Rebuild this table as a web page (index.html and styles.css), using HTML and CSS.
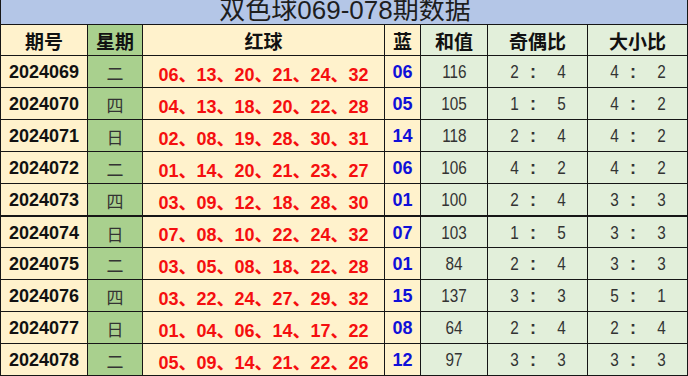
FILE: index.html
```html
<!DOCTYPE html>
<html lang="zh-CN">
<head>
<meta charset="utf-8">
<title>双色球069-078期数据</title>
<link rel="stylesheet" href="styles.css">
</head>
<body>
<div class="sheet">
  <div class="title"><span>双色球069-078期数据</span></div>
  <div class="row head">
    <div class="c y">期号</div><div class="c g">星期</div><div class="c y">红球</div><div class="c y">蓝</div><div class="c lg">和值</div><div class="c lg">奇偶比</div><div class="c lg">大小比</div>
  </div>
  <div class="row">
    <div class="c y id">2024069</div><div class="c g wk">二</div><div class="c y red">06、13、20、21、24、32</div><div class="c y blue">06</div><div class="c lg"><span class="n">116</span></div><div class="c lg ratio"><span class="d">2</span><span class="k">:</span><span class="d e">4</span></div><div class="c lg ratio"><span class="d">4</span><span class="k">:</span><span class="d e">2</span></div>
  </div>
  <div class="row">
    <div class="c y id">2024070</div><div class="c g wk">四</div><div class="c y red">04、13、18、20、22、28</div><div class="c y blue">05</div><div class="c lg"><span class="n">105</span></div><div class="c lg ratio"><span class="d">1</span><span class="k">:</span><span class="d e">5</span></div><div class="c lg ratio"><span class="d">4</span><span class="k">:</span><span class="d e">2</span></div>
  </div>
  <div class="row">
    <div class="c y id">2024071</div><div class="c g wk">日</div><div class="c y red">02、08、19、28、30、31</div><div class="c y blue">14</div><div class="c lg"><span class="n">118</span></div><div class="c lg ratio"><span class="d">2</span><span class="k">:</span><span class="d e">4</span></div><div class="c lg ratio"><span class="d">4</span><span class="k">:</span><span class="d e">2</span></div>
  </div>
  <div class="row">
    <div class="c y id">2024072</div><div class="c g wk">二</div><div class="c y red">01、14、20、21、23、27</div><div class="c y blue">06</div><div class="c lg"><span class="n">106</span></div><div class="c lg ratio"><span class="d">4</span><span class="k">:</span><span class="d e">2</span></div><div class="c lg ratio"><span class="d">4</span><span class="k">:</span><span class="d e">2</span></div>
  </div>
  <div class="row">
    <div class="c y id">2024073</div><div class="c g wk">四</div><div class="c y red">03、09、12、18、28、30</div><div class="c y blue">01</div><div class="c lg"><span class="n">100</span></div><div class="c lg ratio"><span class="d">2</span><span class="k">:</span><span class="d e">4</span></div><div class="c lg ratio"><span class="d">3</span><span class="k">:</span><span class="d e">3</span></div>
  </div>
  <div class="row thick">
    <div class="c y id">2024074</div><div class="c g wk">日</div><div class="c y red">07、08、10、22、24、32</div><div class="c y blue">07</div><div class="c lg"><span class="n">103</span></div><div class="c lg ratio"><span class="d">1</span><span class="k">:</span><span class="d e">5</span></div><div class="c lg ratio"><span class="d">3</span><span class="k">:</span><span class="d e">3</span></div>
  </div>
  <div class="row">
    <div class="c y id">2024075</div><div class="c g wk">二</div><div class="c y red">03、05、08、18、22、28</div><div class="c y blue">01</div><div class="c lg"><span class="n">84</span></div><div class="c lg ratio"><span class="d">2</span><span class="k">:</span><span class="d e">4</span></div><div class="c lg ratio"><span class="d">3</span><span class="k">:</span><span class="d e">3</span></div>
  </div>
  <div class="row">
    <div class="c y id">2024076</div><div class="c g wk">四</div><div class="c y red">03、22、24、27、29、32</div><div class="c y blue">15</div><div class="c lg"><span class="n">137</span></div><div class="c lg ratio"><span class="d">3</span><span class="k">:</span><span class="d e">3</span></div><div class="c lg ratio"><span class="d">5</span><span class="k">:</span><span class="d e">1</span></div>
  </div>
  <div class="row">
    <div class="c y id">2024077</div><div class="c g wk">日</div><div class="c y red">01、04、06、14、17、22</div><div class="c y blue">08</div><div class="c lg"><span class="n">64</span></div><div class="c lg ratio"><span class="d">2</span><span class="k">:</span><span class="d e">4</span></div><div class="c lg ratio"><span class="d">2</span><span class="k">:</span><span class="d e">4</span></div>
  </div>
  <div class="row">
    <div class="c y id">2024078</div><div class="c g wk">二</div><div class="c y red">05、09、14、21、22、26</div><div class="c y blue">12</div><div class="c lg"><span class="n">97</span></div><div class="c lg ratio"><span class="d">3</span><span class="k">:</span><span class="d e">3</span></div><div class="c lg ratio"><span class="d">3</span><span class="k">:</span><span class="d e">3</span></div>
  </div>
</div>
</body>
</html>
```
FILE: styles.css
```css
html, body {
  margin: 0;
  padding: 0;
  background: #ffffff;
}
body {
  width: 688px;
  height: 376px;
  overflow: hidden;
  font-family: "Liberation Sans", "Noto Sans CJK SC", sans-serif;
}
.sheet {
  display: flex;
  flex-direction: column;
  gap: 1px;
  background: #161616;
  padding: 0 1px 1px 1px;
}
.title {
  height: 24px;
  background: #b4c6e7;
  display: flex;
  justify-content: center;
  align-items: flex-end;
  overflow: hidden;
}
.title span {
  font-family: "Liberation Sans", "Noto Sans CJK SC", sans-serif;
  font-size: 26px;
  line-height: 26px;
  color: #1e1e1e;
  margin-bottom: 1px;
  padding-left: 2px;
}
.row {
  display: grid;
  grid-template-columns: 86px 54px 241px 35px 66px 99px 99px;
  gap: 1px;
  height: 31px;
}
.row.head {
  height: 30px;
}
.row.thick {
  margin-top: 1px;
  height: 30px;
}
.c {
  display: flex;
  align-items: center;
  justify-content: center;
  font-size: 18px;
  padding-top: 2px;
  box-sizing: border-box;
}
.head .c {
  font-family: "Noto Sans CJK SC", sans-serif;
  font-weight: 700;
  font-size: 19px;
  color: #111;
  padding-top: 0;
}
.y { background: #fff2cc; }
.g { background: #a9d08e; }
.lg { background: #e2efda; }
.id {
  font-weight: 700;
  color: #111;
}
.wk {
  font-family: "Noto Sans CJK SC", sans-serif;
  font-weight: 400;
  font-size: 17px;
  color: #333;
}
.red {
  font-weight: 700;
  color: #f50f0f;
}
.blue {
  font-weight: 700;
  color: #1010d8;
}
.n, .d {
  display: inline-block;
  transform: scaleX(0.85);
  color: #333;
  font-size: 18px;
}
.ratio {
  justify-content: flex-start;
  padding-left: 17px;
}
.ratio .d {
  width: 19px;
  text-align: center;
}
.ratio .k {
  width: 18px;
  text-align: center;
  font-weight: 700;
  color: #333;
}
.ratio .e {
  margin-left: 10px;
}
```
